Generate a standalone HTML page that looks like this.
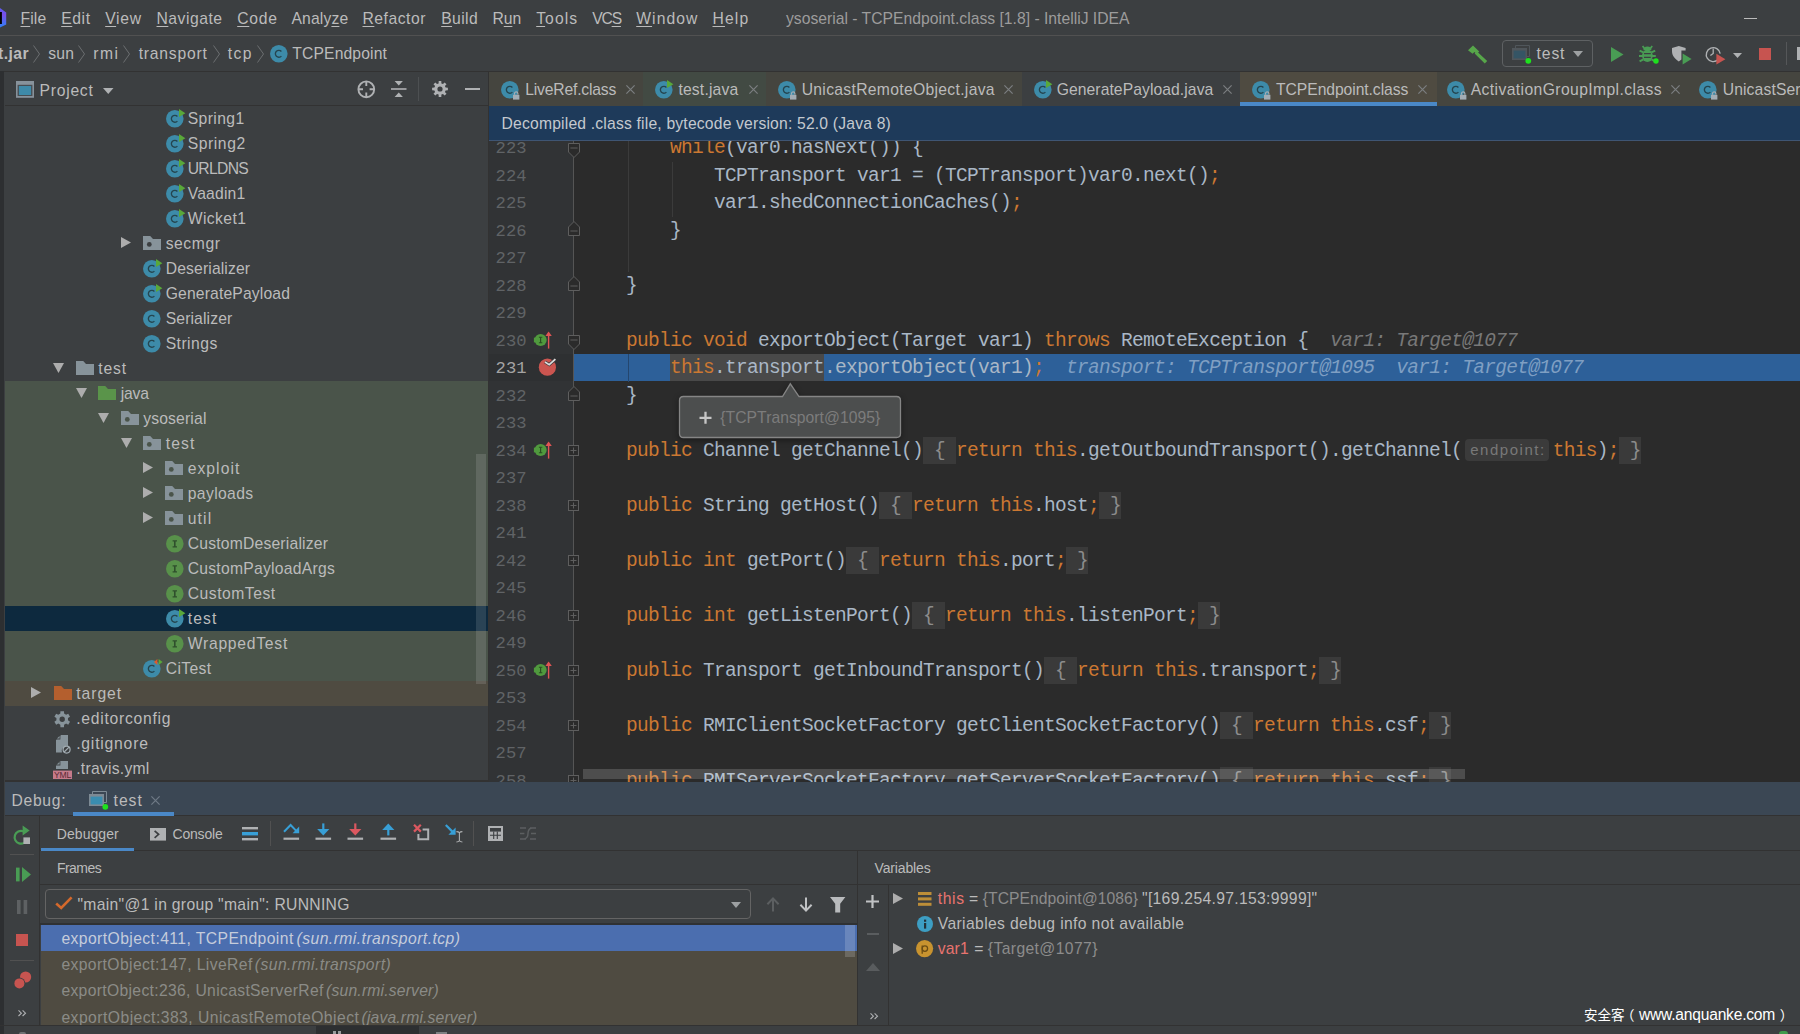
<!DOCTYPE html>
<html lang="en"><head><meta charset="utf-8"><title>ysoserial - TCPEndpoint.class [1.8] - IntelliJ IDEA</title>
<style>
*{box-sizing:border-box;margin:0;padding:0}
html,body{width:1800px;height:1034px;overflow:hidden;background:#3c3f41}
body{position:relative;font-family:"Liberation Sans", "Noto Sans CJK SC", sans-serif;font-size:15.7px;color:#bbbbbb;-webkit-font-smoothing:antialiased}
.a{position:absolute}
.t{position:absolute;white-space:pre;line-height:20px;height:20px;letter-spacing:.45px}
.m{position:absolute;white-space:pre;font-family:"Liberation Mono", "DejaVu Sans Mono", monospace;font-size:19.5px;letter-spacing:-0.7px;line-height:27.5px;height:27.5px;color:#a9b7c6}
.k{color:#cc7832}
.h{color:#787878;font-style:italic}
.ln{position:absolute;left:496px;width:33px;font-family:"Liberation Mono", "DejaVu Sans Mono", monospace;font-size:18.33px;line-height:27.5px;height:27.5px;color:#606366;white-space:pre}
.fp{background:#3a3a3a;color:#8c8c8c}
svg{position:absolute;overflow:visible}
u{text-decoration:underline;text-underline-offset:2px;text-decoration-thickness:1px}
</style></head>
<body>
<div class="a" style="left:0px;top:35px;width:1800px;height:1px;background:#515151;"></div>
<div class="a" style="left:0px;top:71px;width:1800px;height:1px;background:#323232;"></div>
<div class="a" style="left:0px;top:71px;width:4px;height:963px;background:#2d2f31;"></div>
<div class="a" style="left:5px;top:105px;width:483px;height:1px;background:#323232;"></div>
<div class="a" style="left:488px;top:72px;width:1px;height:710px;background:#323232;"></div>
<div class="a" style="left:489px;top:72px;width:1311px;height:34px;background:#3c3f41;"></div>
<div class="a" style="left:489px;top:106px;width:1311px;height:676px;background:#2b2b2b;"></div>
<div class="a" style="left:489px;top:141px;width:85px;height:641px;background:#313335;"></div>
<div class="a" style="left:489px;top:106px;width:1311px;height:34px;background:#1e3a5a;"></div>
<div class="a" style="left:489px;top:140px;width:1311px;height:1px;background:#3f5573;"></div>
<div class="a" style="left:5px;top:780px;width:484px;height:2px;background:#323232;"></div>
<div class="a" style="left:5px;top:782px;width:1795px;height:34px;background:#3b4754;"></div>
<div class="a" style="left:5px;top:815px;width:1795px;height:1px;background:#323232;"></div>
<div class="a" style="left:0px;top:1025px;width:1800px;height:1px;background:#323232;"></div>
<div class="a" style="left:316px;top:1026px;width:103px;height:8px;background:#2d2f31;"></div>
<div class="a" style="left:19px;top:1032px;width:7px;height:2px;background:#6e7173;border-radius:3px 3px 0 0"></div>
<div class="a" style="left:333px;top:1031px;width:3px;height:3px;background:#9a9c9e;"></div>
<div class="a" style="left:338px;top:1031px;width:3px;height:3px;background:#9a9c9e;"></div>
<div class="a" style="left:436px;top:1032px;width:11px;height:2px;background:#7d8082;"></div>
<div class="a" style="left:1779px;top:1031px;width:9px;height:6px;background:#3f9b4b;border-radius:4px"></div>
<svg style="left:0px;top:8px" width="7" height="20" viewBox="0 0 7 20"><defs><linearGradient id="lg" x1="0" y1="0" x2="0" y2="1"><stop offset="0" stop-color="#5a5bf2"/><stop offset="0.35" stop-color="#7a4fe8"/><stop offset="1" stop-color="#2f80f7"/></linearGradient></defs><path d="M0 0 L6.2 4.6 V16.4 L0 19.4 Z" fill="url(#lg)"/><path d="M0 4 H1.9 V16 H0 Z" fill="#000"/></svg>
<div class="t" style="left:20.5px;top:8.5px;letter-spacing:0.106px;"><u>F</u>ile</div>
<div class="t" style="left:61.2px;top:8.5px;letter-spacing:0.618px;"><u>E</u>dit</div>
<div class="t" style="left:105.2px;top:8.5px;letter-spacing:0.727px;"><u>V</u>iew</div>
<div class="t" style="left:156.5px;top:8.5px;letter-spacing:0.525px;"><u>N</u>avigate</div>
<div class="t" style="left:237.2px;top:8.5px;letter-spacing:0.795px;"><u>C</u>ode</div>
<div class="t" style="left:291.5px;top:8.5px;letter-spacing:0.131px;">Analy<u>z</u>e</div>
<div class="t" style="left:362.5px;top:8.5px;letter-spacing:0.515px;"><u>R</u>efactor</div>
<div class="t" style="left:441.2px;top:8.5px;letter-spacing:0.402px;"><u>B</u>uild</div>
<div class="t" style="left:492.5px;top:8.5px;letter-spacing:-0.091px;">R<u>u</u>n</div>
<div class="t" style="left:536.2px;top:8.5px;letter-spacing:1.069px;"><u>T</u>ools</div>
<div class="t" style="left:592.2px;top:8.5px;letter-spacing:-1.183px;">VC<u>S</u></div>
<div class="t" style="left:636.2px;top:8.5px;letter-spacing:1.081px;"><u>W</u>indow</div>
<div class="t" style="left:712.5px;top:8.5px;letter-spacing:1.111px;"><u>H</u>elp</div>
<div class="t" style="left:786px;top:8.5px;color:#9c9c9c;letter-spacing:0.005px;">ysoserial - TCPEndpoint.class [1.8] - IntelliJ IDEA</div>
<div class="a" style="left:1744px;top:18px;width:13px;height:1px;background:#bbbbbb;"></div>
<div class="t" style="left:-8.6px;top:43.5px;font-weight:bold;">rt.jar</div>
<svg style="left:32.5px;top:44.5px" width="7" height="18" viewBox="0 0 7 18"><path d="M0.5 0.5 L6.5 9 L0.5 17.5" fill="none" stroke="#6b6e70" stroke-width="1"/></svg>
<div class="t" style="left:48.3px;top:43.5px;letter-spacing:0.152px;">sun</div>
<svg style="left:78.0px;top:44.5px" width="7" height="18" viewBox="0 0 7 18"><path d="M0.5 0.5 L6.5 9 L0.5 17.5" fill="none" stroke="#6b6e70" stroke-width="1"/></svg>
<div class="t" style="left:93.3px;top:43.5px;letter-spacing:1.409px;">rmi</div>
<svg style="left:123.0px;top:44.5px" width="7" height="18" viewBox="0 0 7 18"><path d="M0.5 0.5 L6.5 9 L0.5 17.5" fill="none" stroke="#6b6e70" stroke-width="1"/></svg>
<div class="t" style="left:138.7px;top:43.5px;letter-spacing:0.785px;">transport</div>
<svg style="left:212.5px;top:44.5px" width="7" height="18" viewBox="0 0 7 18"><path d="M0.5 0.5 L6.5 9 L0.5 17.5" fill="none" stroke="#6b6e70" stroke-width="1"/></svg>
<div class="t" style="left:227.7px;top:43.5px;letter-spacing:1.431px;">tcp</div>
<svg style="left:256.5px;top:44.5px" width="7" height="18" viewBox="0 0 7 18"><path d="M0.5 0.5 L6.5 9 L0.5 17.5" fill="none" stroke="#6b6e70" stroke-width="1"/></svg>
<svg style="left:269.5px;top:44.8px" width="17.6" height="17.6" viewBox="0 0 17.6 17.6"><circle cx="8.8" cy="8.8" r="8.8" fill="#3d8ba9"/><path d="M11.4 6.500000000000001 A3.45 3.45 0 1 0 11.4 11.100000000000001" fill="none" stroke="#25454f" stroke-width="1.35"/></svg>
<div class="t" style="left:292.3px;top:43.5px;letter-spacing:0.129px;">TCPEndpoint</div>
<svg style="left:1467px;top:44.5px" width="21" height="19" viewBox="0 0 21 19"><path d="M1 5.2 L6 0.6 L12.2 6.4 L9.6 9 L7.4 7 L5.6 8.8 Z" fill="#57a64a"/><path d="M7.6 8.6 L10 6.4 L20.2 16 L17.8 18.4 Z" fill="#57a64a"/></svg>
<div class="a" style="left:1502px;top:40px;width:91px;height:27px;border:1px solid #5e6163;border-radius:4px"></div>
<svg style="left:1511.5px;top:45px" width="20" height="19" viewBox="0 0 20 19"><path d="M3.5 3 V0.5 H17.5 V11.5 H15" fill="none" stroke="#50565b" stroke-width="1"/><rect x="0" y="3" width="15" height="12" fill="#50565b"/><rect x="1.6" y="5.6" width="11.8" height="7.8" fill="#355565"/><circle cx="16.3" cy="15.8" r="2.9" fill="#1ee11e"/></svg>
<div class="t" style="left:1536.6px;top:44.3px;letter-spacing:0.868px;">test</div>
<svg style="left:1573px;top:51px" width="10" height="6" viewBox="0 0 10 6"><path d="M0 0 H10 L5 6 Z" fill="#9da0a2"/></svg>
<svg style="left:1611px;top:46.5px" width="12.5" height="15" viewBox="0 0 12.5 15"><path d="M0 0 L12.5 7.5 L0 15 Z" fill="#499c54"/></svg>
<svg style="left:1639px;top:45px" width="20" height="19" viewBox="0 0 20 19"><ellipse cx="8.4" cy="10.8" rx="5.3" ry="6.2" fill="#499c54"/><path d="M5.4 3.6 L3.6 1 M11.4 3.6 L13.2 1" stroke="#499c54" stroke-width="1.7" fill="none"/><path d="M4.4 5.2 A4 3.6 0 0 1 12.4 5.2 Z" fill="#499c54"/><path d="M4.4 7.4 L0.6 5.6 M12.4 7.4 L16.2 5.6 M4 11 H0 M12.8 11 H16.8 M4.4 14.4 L0.6 16.4 M12.4 14.4 L16.2 16.4" stroke="#499c54" stroke-width="2" fill="none"/><path d="M5 8.6 H11.8 M5 12.4 H11.8" stroke="#3c3f41" stroke-width="1.1"/><circle cx="17" cy="16" r="2.7" fill="#1ee11e"/></svg>
<svg style="left:1671.5px;top:46px" width="21" height="19" viewBox="0 0 21 19"><path d="M0 2 L6.8 0 L13.6 2 V4.6 H9.4 V13.4 L6.8 15.4 C2 12.4 0 9 0 5 Z" fill="#afb1b3"/><path d="M10.6 7.6 L19.6 13 L10.6 18.4 Z" fill="#499c54"/></svg>
<svg style="left:1705px;top:45px" width="22" height="20" viewBox="0 0 22 20"><path d="M13.2 14.6 A7 7 0 1 1 15.2 8.6" fill="none" stroke="#afb1b3" stroke-width="1.4"/><path d="M8.2 3.6 V8.4 L5.4 10.6" fill="none" stroke="#afb1b3" stroke-width="1.3"/><path d="M11.4 8.8 L20.4 14.2 L11.4 19.6 Z" fill="#c75450"/></svg>
<svg style="left:1732.5px;top:53px" width="9" height="5" viewBox="0 0 9 5"><path d="M0 0 H9 L4.5 5 Z" fill="#afb1b3"/></svg>
<div class="a" style="left:1759px;top:48px;width:12px;height:12px;background:#c75450;"></div>
<div class="a" style="left:1785.5px;top:42px;width:1px;height:23px;background:#555759;"></div>
<div class="a" style="left:1797px;top:47px;width:3px;height:13px;background:#afb1b3;"></div>
<svg style="left:16px;top:81.2px" width="18" height="16.8" viewBox="0 0 18 16.8"><rect x="0" y="0" width="18" height="16.8" fill="#87929b"/><rect x="1.6" y="3.8" width="14.8" height="11.2" fill="#474d52"/><rect x="2.9" y="5" width="12.2" height="9" fill="#3e8aa9"/></svg>
<div class="t" style="left:39.6px;top:80.6px;letter-spacing:0.729px;">Project</div>
<svg style="left:103px;top:87.5px" width="10.5" height="6" viewBox="0 0 10.5 6"><path d="M0 0 H10.5 L5.25 6 Z" fill="#afb1b3"/></svg>
<svg style="left:356.5px;top:80px" width="18.6" height="18.6" viewBox="0 0 18.6 18.6"><circle cx="9.3" cy="9.3" r="7.9" fill="none" stroke="#afb1b3" stroke-width="1.9"/><path d="M9.3 1 V6 M9.3 12.6 V17.6 M1 9.3 H6 M12.6 9.3 H17.6" stroke="#afb1b3" stroke-width="1.9"/></svg>
<svg style="left:390.5px;top:81px" width="15.5" height="16" viewBox="0 0 15.5 16"><path d="M3.6 0 H11.9 L7.75 4.4 Z M3.6 16 H11.9 L7.75 11.6 Z" fill="#afb1b3"/><path d="M0 8 H15.5" stroke="#afb1b3" stroke-width="1.6"/></svg>
<div class="a" style="left:418px;top:77px;width:1px;height:24px;background:#4d5052;"></div>
<svg style="left:431.7px;top:81.2px" width="16" height="16" viewBox="0 0 16 16"><path d="M6.69 0.11 L9.31 0.11 L9.39 2.41 L10.97 3.07 L12.65 1.49 L14.51 3.35 L12.93 5.03 L13.59 6.61 L15.89 6.69 L15.89 9.31 L13.59 9.39 L12.93 10.97 L14.51 12.65 L12.65 14.51 L10.97 12.93 L9.39 13.59 L9.31 15.89 L6.69 15.89 L6.61 13.59 L5.03 12.93 L3.35 14.51 L1.49 12.65 L3.07 10.97 L2.41 9.39 L0.11 9.31 L0.11 6.69 L2.41 6.61 L3.07 5.03 L1.49 3.35 L3.35 1.49 L5.03 3.07 L6.61 2.41 Z M10.6 8 A2.6 2.6 0 1 0 5.4 8 A2.6 2.6 0 1 0 10.6 8 Z" fill="#afb1b3" fill-rule="evenodd"/></svg>
<div class="a" style="left:464.5px;top:88.3px;width:15px;height:1.7px;background:#afb1b3;"></div>
<div class="a" style="left:489px;top:72px;width:154px;height:34px;background:#45453f;"></div>
<svg style="left:500.9px;top:81.0px" width="17.6" height="17.6" viewBox="0 0 17.6 17.6"><circle cx="8.8" cy="8.8" r="8.8" fill="#3d8ba9"/><path d="M11.4 6.500000000000001 A3.45 3.45 0 1 0 11.4 11.100000000000001" fill="none" stroke="#25454f" stroke-width="1.35"/></svg><svg style="left:513.3px;top:91.39999999999999px" width="6.4" height="8.6" viewBox="0 0 6.4 8.6"><path d="M1.5 3.8 V2.6 A1.7 1.7 0 0 1 4.9 2.6 V3.8" fill="none" stroke="#a3adb5" stroke-width="1.2"/><rect x="0" y="3.8" width="6.4" height="4.8" fill="#a3adb5"/></svg>
<div class="t" style="left:525.1999999999999px;top:80.4px;letter-spacing:-0.175px;">LiveRef.class</div>
<svg style="left:625.5px;top:85.0px" width="9" height="9" viewBox="0 0 9 9"><path d="M0.4 0.4 L8.6 8.6 M8.6 0.4 L0.4 8.6" stroke="#7b7e80" stroke-width="1.2" fill="none"/></svg>
<div class="a" style="left:643px;top:72px;width:123px;height:34px;background:#424a43;"></div>
<svg style="left:654.5px;top:81.0px" width="17.6" height="17.6" viewBox="0 0 17.6 17.6"><circle cx="8.8" cy="8.8" r="8.8" fill="#3d8ba9"/><path d="M11.4 6.500000000000001 A3.45 3.45 0 1 0 11.4 11.100000000000001" fill="none" stroke="#25454f" stroke-width="1.35"/></svg><svg style="left:667.0px;top:80.0px" width="6.4" height="8" viewBox="0 0 6.4 8"><path d="M0 0 L6.4 4.2 L0 8 Z" fill="#59a83a"/></svg>
<div class="t" style="left:678.4px;top:80.4px;letter-spacing:0.183px;">test.java</div>
<svg style="left:748.8px;top:85.0px" width="9" height="9" viewBox="0 0 9 9"><path d="M0.4 0.4 L8.6 8.6 M8.6 0.4 L0.4 8.6" stroke="#7b7e80" stroke-width="1.2" fill="none"/></svg>
<div class="a" style="left:766px;top:72px;width:256px;height:34px;background:#45453f;"></div>
<svg style="left:777.9000000000001px;top:81.0px" width="17.6" height="17.6" viewBox="0 0 17.6 17.6"><circle cx="8.8" cy="8.8" r="8.8" fill="#3d8ba9"/><path d="M11.4 6.500000000000001 A3.45 3.45 0 1 0 11.4 11.100000000000001" fill="none" stroke="#25454f" stroke-width="1.35"/></svg><svg style="left:790.3000000000001px;top:91.39999999999999px" width="6.4" height="8.6" viewBox="0 0 6.4 8.6"><path d="M1.5 3.8 V2.6 A1.7 1.7 0 0 1 4.9 2.6 V3.8" fill="none" stroke="#a3adb5" stroke-width="1.2"/><rect x="0" y="3.8" width="6.4" height="4.8" fill="#a3adb5"/></svg>
<div class="t" style="left:801.6999999999999px;top:80.4px;letter-spacing:0.312px;">UnicastRemoteObject.java</div>
<svg style="left:1003.8px;top:85.0px" width="9" height="9" viewBox="0 0 9 9"><path d="M0.4 0.4 L8.6 8.6 M8.6 0.4 L0.4 8.6" stroke="#7b7e80" stroke-width="1.2" fill="none"/></svg>
<div class="a" style="left:1022px;top:72px;width:218px;height:34px;background:#3c3f41;"></div>
<svg style="left:1033.5px;top:81.0px" width="17.6" height="17.6" viewBox="0 0 17.6 17.6"><circle cx="8.8" cy="8.8" r="8.8" fill="#3d8ba9"/><path d="M11.4 6.500000000000001 A3.45 3.45 0 1 0 11.4 11.100000000000001" fill="none" stroke="#25454f" stroke-width="1.35"/></svg><svg style="left:1046.0px;top:80.0px" width="6.4" height="8" viewBox="0 0 6.4 8"><path d="M0 0 L6.4 4.2 L0 8 Z" fill="#59a83a"/></svg>
<div class="t" style="left:1056.7px;top:80.4px;letter-spacing:0.071px;">GeneratePayload.java</div>
<svg style="left:1222.8px;top:85.0px" width="9" height="9" viewBox="0 0 9 9"><path d="M0.4 0.4 L8.6 8.6 M8.6 0.4 L0.4 8.6" stroke="#7b7e80" stroke-width="1.2" fill="none"/></svg>
<div class="a" style="left:1240px;top:72px;width:197px;height:34px;background:#4f4b41;"></div>
<svg style="left:1251.9px;top:81.0px" width="17.6" height="17.6" viewBox="0 0 17.6 17.6"><circle cx="8.8" cy="8.8" r="8.8" fill="#3d8ba9"/><path d="M11.4 6.500000000000001 A3.45 3.45 0 1 0 11.4 11.100000000000001" fill="none" stroke="#25454f" stroke-width="1.35"/></svg><svg style="left:1264.3px;top:91.39999999999999px" width="6.4" height="8.6" viewBox="0 0 6.4 8.6"><path d="M1.5 3.8 V2.6 A1.7 1.7 0 0 1 4.9 2.6 V3.8" fill="none" stroke="#a3adb5" stroke-width="1.2"/><rect x="0" y="3.8" width="6.4" height="4.8" fill="#a3adb5"/></svg>
<div class="t" style="left:1276.1000000000001px;top:80.4px;letter-spacing:-0.075px;">TCPEndpoint.class</div>
<svg style="left:1417.8px;top:85.0px" width="9" height="9" viewBox="0 0 9 9"><path d="M0.4 0.4 L8.6 8.6 M8.6 0.4 L0.4 8.6" stroke="#7b7e80" stroke-width="1.2" fill="none"/></svg>
<div class="a" style="left:1437px;top:72px;width:250px;height:34px;background:#45453f;"></div>
<svg style="left:1447.2px;top:81.0px" width="17.6" height="17.6" viewBox="0 0 17.6 17.6"><circle cx="8.8" cy="8.8" r="8.8" fill="#3d8ba9"/><path d="M11.4 6.500000000000001 A3.45 3.45 0 1 0 11.4 11.100000000000001" fill="none" stroke="#25454f" stroke-width="1.35"/></svg><svg style="left:1459.6px;top:91.39999999999999px" width="6.4" height="8.6" viewBox="0 0 6.4 8.6"><path d="M1.5 3.8 V2.6 A1.7 1.7 0 0 1 4.9 2.6 V3.8" fill="none" stroke="#a3adb5" stroke-width="1.2"/><rect x="0" y="3.8" width="6.4" height="4.8" fill="#a3adb5"/></svg>
<div class="t" style="left:1470.7px;top:80.4px;letter-spacing:0.398px;">ActivationGroupImpl.class</div>
<svg style="left:1670.5px;top:85.0px" width="9" height="9" viewBox="0 0 9 9"><path d="M0.4 0.4 L8.6 8.6 M8.6 0.4 L0.4 8.6" stroke="#7b7e80" stroke-width="1.2" fill="none"/></svg>
<div class="a" style="left:1687px;top:72px;width:113px;height:34px;background:#45453f;"></div>
<svg style="left:1698.5px;top:81.0px" width="17.6" height="17.6" viewBox="0 0 17.6 17.6"><circle cx="8.8" cy="8.8" r="8.8" fill="#3d8ba9"/><path d="M11.4 6.500000000000001 A3.45 3.45 0 1 0 11.4 11.100000000000001" fill="none" stroke="#25454f" stroke-width="1.35"/></svg><svg style="left:1710.8999999999999px;top:91.39999999999999px" width="6.4" height="8.6" viewBox="0 0 6.4 8.6"><path d="M1.5 3.8 V2.6 A1.7 1.7 0 0 1 4.9 2.6 V3.8" fill="none" stroke="#a3adb5" stroke-width="1.2"/><rect x="0" y="3.8" width="6.4" height="4.8" fill="#a3adb5"/></svg>
<div class="t" style="left:1722.7px;top:80.4px;letter-spacing:0.13px;">UnicastSer</div>
<div class="a" style="left:1240px;top:102px;width:197px;height:4px;background:#4a88c7;"></div>
<div class="t" style="left:501.6px;top:114.2px;color:#c4c9cf;letter-spacing:0.183px;">Decompiled .class file, bytecode version: 52.0 (Java 8)</div>
<div class="a" style="left:5px;top:381px;width:483px;height:300px;background:#4a544a;"></div>
<div class="a" style="left:5px;top:681px;width:483px;height:25px;background:#4f4b41;"></div>
<div class="a" style="left:5px;top:606px;width:483px;height:25px;background:#0d293e;"></div>
<svg style="left:166.29999999999998px;top:109.9px" width="17.6" height="17.6" viewBox="0 0 17.6 17.6"><circle cx="8.8" cy="8.8" r="8.8" fill="#3d8ba9"/><path d="M11.4 6.500000000000001 A3.45 3.45 0 1 0 11.4 11.100000000000001" fill="none" stroke="#25454f" stroke-width="1.35"/></svg><svg style="left:178.79999999999998px;top:108.9px" width="6.4" height="8" viewBox="0 0 6.4 8"><path d="M0 0 L6.4 4.2 L0 8 Z" fill="#59a83a"/></svg>
<div class="t" style="left:187.7px;top:108.9px;letter-spacing:0.404px;">Spring1</div>
<svg style="left:166.29999999999998px;top:134.89999999999998px" width="17.6" height="17.6" viewBox="0 0 17.6 17.6"><circle cx="8.8" cy="8.8" r="8.8" fill="#3d8ba9"/><path d="M11.4 6.500000000000001 A3.45 3.45 0 1 0 11.4 11.100000000000001" fill="none" stroke="#25454f" stroke-width="1.35"/></svg><svg style="left:178.79999999999998px;top:133.89999999999998px" width="6.4" height="8" viewBox="0 0 6.4 8"><path d="M0 0 L6.4 4.2 L0 8 Z" fill="#59a83a"/></svg>
<div class="t" style="left:187.7px;top:133.9px;letter-spacing:0.57px;">Spring2</div>
<svg style="left:166.29999999999998px;top:159.89999999999998px" width="17.6" height="17.6" viewBox="0 0 17.6 17.6"><circle cx="8.8" cy="8.8" r="8.8" fill="#3d8ba9"/><path d="M11.4 6.500000000000001 A3.45 3.45 0 1 0 11.4 11.100000000000001" fill="none" stroke="#25454f" stroke-width="1.35"/></svg><svg style="left:178.79999999999998px;top:158.89999999999998px" width="6.4" height="8" viewBox="0 0 6.4 8"><path d="M0 0 L6.4 4.2 L0 8 Z" fill="#59a83a"/></svg>
<div class="t" style="left:187.7px;top:158.9px;letter-spacing:-0.683px;">URLDNS</div>
<svg style="left:166.29999999999998px;top:184.89999999999998px" width="17.6" height="17.6" viewBox="0 0 17.6 17.6"><circle cx="8.8" cy="8.8" r="8.8" fill="#3d8ba9"/><path d="M11.4 6.500000000000001 A3.45 3.45 0 1 0 11.4 11.100000000000001" fill="none" stroke="#25454f" stroke-width="1.35"/></svg><svg style="left:178.79999999999998px;top:183.89999999999998px" width="6.4" height="8" viewBox="0 0 6.4 8"><path d="M0 0 L6.4 4.2 L0 8 Z" fill="#59a83a"/></svg>
<div class="t" style="left:187.7px;top:183.9px;letter-spacing:0.18px;">Vaadin1</div>
<svg style="left:166.29999999999998px;top:209.89999999999998px" width="17.6" height="17.6" viewBox="0 0 17.6 17.6"><circle cx="8.8" cy="8.8" r="8.8" fill="#3d8ba9"/><path d="M11.4 6.500000000000001 A3.45 3.45 0 1 0 11.4 11.100000000000001" fill="none" stroke="#25454f" stroke-width="1.35"/></svg><svg style="left:178.79999999999998px;top:208.89999999999998px" width="6.4" height="8" viewBox="0 0 6.4 8"><path d="M0 0 L6.4 4.2 L0 8 Z" fill="#59a83a"/></svg>
<div class="t" style="left:187.7px;top:208.9px;letter-spacing:0.401px;">Wicket1</div>
<svg style="left:143.3px;top:236.3px" width="18" height="14" viewBox="0 0 18 14"><path d="M0 0 H7.2 L10 3 H18 V14 H0 Z" fill="#87939a"/><circle cx="6.3" cy="8.4" r="2.4" fill="#3c3f41"/></svg>
<svg style="left:120.8px;top:237.3px" width="10" height="11" viewBox="0 0 10 11"><path d="M0 0 L10 5.5 L0 11 Z" fill="#adadad"/></svg>
<div class="t" style="left:165.7px;top:233.9px;letter-spacing:0.552px;">secmgr</div>
<svg style="left:143.29999999999998px;top:259.9px" width="17.6" height="17.6" viewBox="0 0 17.6 17.6"><circle cx="8.8" cy="8.8" r="8.8" fill="#3d8ba9"/><path d="M11.4 6.500000000000001 A3.45 3.45 0 1 0 11.4 11.100000000000001" fill="none" stroke="#25454f" stroke-width="1.35"/></svg><svg style="left:155.79999999999998px;top:258.9px" width="6.4" height="8" viewBox="0 0 6.4 8"><path d="M0 0 L6.4 4.2 L0 8 Z" fill="#59a83a"/></svg>
<div class="t" style="left:165.7px;top:258.9px;letter-spacing:0.143px;">Deserializer</div>
<svg style="left:143.29999999999998px;top:284.9px" width="17.6" height="17.6" viewBox="0 0 17.6 17.6"><circle cx="8.8" cy="8.8" r="8.8" fill="#3d8ba9"/><path d="M11.4 6.500000000000001 A3.45 3.45 0 1 0 11.4 11.100000000000001" fill="none" stroke="#25454f" stroke-width="1.35"/></svg><svg style="left:155.79999999999998px;top:283.9px" width="6.4" height="8" viewBox="0 0 6.4 8"><path d="M0 0 L6.4 4.2 L0 8 Z" fill="#59a83a"/></svg>
<div class="t" style="left:165.7px;top:283.9px;letter-spacing:0.149px;">GeneratePayload</div>
<svg style="left:143.29999999999998px;top:309.9px" width="17.6" height="17.6" viewBox="0 0 17.6 17.6"><circle cx="8.8" cy="8.8" r="8.8" fill="#3d8ba9"/><path d="M11.4 6.500000000000001 A3.45 3.45 0 1 0 11.4 11.100000000000001" fill="none" stroke="#25454f" stroke-width="1.35"/></svg>
<div class="t" style="left:165.7px;top:308.9px;letter-spacing:0.134px;">Serializer</div>
<svg style="left:143.29999999999998px;top:334.9px" width="17.6" height="17.6" viewBox="0 0 17.6 17.6"><circle cx="8.8" cy="8.8" r="8.8" fill="#3d8ba9"/><path d="M11.4 6.500000000000001 A3.45 3.45 0 1 0 11.4 11.100000000000001" fill="none" stroke="#25454f" stroke-width="1.35"/></svg>
<div class="t" style="left:165.7px;top:333.9px;letter-spacing:0.462px;">Strings</div>
<svg style="left:75.8px;top:361.3px" width="18" height="14" viewBox="0 0 18 14"><path d="M0 0 H7.2 L10 3 H18 V14 H0 Z" fill="#87939a"/></svg>
<svg style="left:53.3px;top:362.6px" width="11" height="10" viewBox="0 0 11 10"><path d="M0 0 L11 0 L5.5 10 Z" fill="#adadad"/></svg>
<div class="t" style="left:98.2px;top:358.9px;letter-spacing:0.901px;">test</div>
<svg style="left:98.3px;top:386.3px" width="18" height="14" viewBox="0 0 18 14"><path d="M0 0 H7.2 L10 3 H18 V14 H0 Z" fill="#5a944a"/></svg>
<svg style="left:75.8px;top:387.6px" width="11" height="10" viewBox="0 0 11 10"><path d="M0 0 L11 0 L5.5 10 Z" fill="#adadad"/></svg>
<div class="t" style="left:120.7px;top:383.9px;letter-spacing:-0.194px;">java</div>
<svg style="left:120.8px;top:411.3px" width="18" height="14" viewBox="0 0 18 14"><path d="M0 0 H7.2 L10 3 H18 V14 H0 Z" fill="#87939a"/><circle cx="6.3" cy="8.4" r="2.4" fill="#4a544a"/></svg>
<svg style="left:98.3px;top:412.6px" width="11" height="10" viewBox="0 0 11 10"><path d="M0 0 L11 0 L5.5 10 Z" fill="#adadad"/></svg>
<div class="t" style="left:143.2px;top:408.9px;letter-spacing:0.162px;">ysoserial</div>
<svg style="left:143.3px;top:436.3px" width="18" height="14" viewBox="0 0 18 14"><path d="M0 0 H7.2 L10 3 H18 V14 H0 Z" fill="#87939a"/><circle cx="6.3" cy="8.4" r="2.4" fill="#4a544a"/></svg>
<svg style="left:120.8px;top:437.6px" width="11" height="10" viewBox="0 0 11 10"><path d="M0 0 L11 0 L5.5 10 Z" fill="#adadad"/></svg>
<div class="t" style="left:165.7px;top:433.9px;letter-spacing:1.101px;">test</div>
<svg style="left:165.3px;top:461.3px" width="18" height="14" viewBox="0 0 18 14"><path d="M0 0 H7.2 L10 3 H18 V14 H0 Z" fill="#87939a"/><circle cx="6.3" cy="8.4" r="2.4" fill="#4a544a"/></svg>
<svg style="left:142.8px;top:462.3px" width="10" height="11" viewBox="0 0 10 11"><path d="M0 0 L10 5.5 L0 11 Z" fill="#adadad"/></svg>
<div class="t" style="left:187.7px;top:458.9px;letter-spacing:1.04px;">exploit</div>
<svg style="left:165.3px;top:486.3px" width="18" height="14" viewBox="0 0 18 14"><path d="M0 0 H7.2 L10 3 H18 V14 H0 Z" fill="#87939a"/><circle cx="6.3" cy="8.4" r="2.4" fill="#4a544a"/></svg>
<svg style="left:142.8px;top:487.3px" width="10" height="11" viewBox="0 0 10 11"><path d="M0 0 L10 5.5 L0 11 Z" fill="#adadad"/></svg>
<div class="t" style="left:187.7px;top:483.9px;letter-spacing:0.386px;">payloads</div>
<svg style="left:165.3px;top:511.3px" width="18" height="14" viewBox="0 0 18 14"><path d="M0 0 H7.2 L10 3 H18 V14 H0 Z" fill="#87939a"/><circle cx="6.3" cy="8.4" r="2.4" fill="#4a544a"/></svg>
<svg style="left:142.8px;top:512.3px" width="10" height="11" viewBox="0 0 10 11"><path d="M0 0 L10 5.5 L0 11 Z" fill="#adadad"/></svg>
<div class="t" style="left:187.7px;top:508.9px;letter-spacing:1.146px;">util</div>
<svg style="left:166.29999999999998px;top:534.9000000000001px" width="17.6" height="17.6" viewBox="0 0 17.6 17.6"><circle cx="8.8" cy="8.8" r="8.8" fill="#58914a"/><path d="M6.6000000000000005 5.200000000000001 H11.0 V6.4 H9.600000000000001 V11.200000000000001 H11.0 V12.4 H6.6000000000000005 V11.200000000000001 H8.0 V6.4 H6.6000000000000005 Z" fill="#2f4f2c"/></svg>
<div class="t" style="left:187.7px;top:533.9px;letter-spacing:0.201px;">CustomDeserializer</div>
<svg style="left:166.29999999999998px;top:559.9000000000001px" width="17.6" height="17.6" viewBox="0 0 17.6 17.6"><circle cx="8.8" cy="8.8" r="8.8" fill="#58914a"/><path d="M6.6000000000000005 5.200000000000001 H11.0 V6.4 H9.600000000000001 V11.200000000000001 H11.0 V12.4 H6.6000000000000005 V11.200000000000001 H8.0 V6.4 H6.6000000000000005 Z" fill="#2f4f2c"/></svg>
<div class="t" style="left:187.7px;top:558.9px;letter-spacing:0.256px;">CustomPayloadArgs</div>
<svg style="left:166.29999999999998px;top:584.9000000000001px" width="17.6" height="17.6" viewBox="0 0 17.6 17.6"><circle cx="8.8" cy="8.8" r="8.8" fill="#58914a"/><path d="M6.6000000000000005 5.200000000000001 H11.0 V6.4 H9.600000000000001 V11.200000000000001 H11.0 V12.4 H6.6000000000000005 V11.200000000000001 H8.0 V6.4 H6.6000000000000005 Z" fill="#2f4f2c"/></svg>
<div class="t" style="left:187.7px;top:583.9px;letter-spacing:0.519px;">CustomTest</div>
<svg style="left:166.29999999999998px;top:609.9000000000001px" width="17.6" height="17.6" viewBox="0 0 17.6 17.6"><circle cx="8.8" cy="8.8" r="8.8" fill="#3d8ba9"/><path d="M11.4 6.500000000000001 A3.45 3.45 0 1 0 11.4 11.100000000000001" fill="none" stroke="#25454f" stroke-width="1.35"/></svg><svg style="left:178.79999999999998px;top:608.9000000000001px" width="6.4" height="8" viewBox="0 0 6.4 8"><path d="M0 0 L6.4 4.2 L0 8 Z" fill="#59a83a"/></svg>
<div class="t" style="left:187.7px;top:608.9px;letter-spacing:1.101px;">test</div>
<svg style="left:166.29999999999998px;top:634.9000000000001px" width="17.6" height="17.6" viewBox="0 0 17.6 17.6"><circle cx="8.8" cy="8.8" r="8.8" fill="#58914a"/><path d="M6.6000000000000005 5.200000000000001 H11.0 V6.4 H9.600000000000001 V11.200000000000001 H11.0 V12.4 H6.6000000000000005 V11.200000000000001 H8.0 V6.4 H6.6000000000000005 Z" fill="#2f4f2c"/></svg>
<div class="t" style="left:187.7px;top:633.9px;letter-spacing:0.746px;">WrappedTest</div>
<svg style="left:143.29999999999998px;top:659.9000000000001px" width="17.6" height="17.6" viewBox="0 0 17.6 17.6"><circle cx="8.8" cy="8.8" r="8.8" fill="#3d8ba9"/><path d="M11.4 6.500000000000001 A3.45 3.45 0 1 0 11.4 11.100000000000001" fill="none" stroke="#25454f" stroke-width="1.35"/></svg><svg style="left:153.5px;top:658.9000000000001px" width="8.6" height="6" viewBox="0 0 8.6 6"><path d="M3.4 0 V6 L0 3 Z" fill="#e05a2b"/><path d="M4.6 0 L8.6 3 L4.6 6 Z" fill="#59a83a"/></svg>
<div class="t" style="left:165.7px;top:658.9px;letter-spacing:0.381px;">CiTest</div>
<svg style="left:53.8px;top:686.3px" width="18" height="14" viewBox="0 0 18 14"><path d="M0 0 H7.2 L10 3 H18 V14 H0 Z" fill="#b45f2e"/></svg>
<svg style="left:31.299999999999997px;top:687.3px" width="10" height="11" viewBox="0 0 10 11"><path d="M0 0 L10 5.5 L0 11 Z" fill="#adadad"/></svg>
<div class="t" style="left:76.2px;top:683.9px;letter-spacing:0.975px;">target</div>
<svg style="left:53.8px;top:710.5999999999999px" width="16.4" height="16.4" viewBox="0 0 16.4 16.4"><path d="M6.41 0.20 L9.99 0.20 L10.08 2.60 L12.10 3.77 L14.24 2.65 L16.02 5.75 L13.99 7.03 L13.99 9.37 L16.02 10.65 L14.24 13.75 L12.10 12.63 L10.08 13.80 L9.99 16.20 L6.41 16.20 L6.32 13.80 L4.30 12.63 L2.16 13.75 L0.38 10.65 L2.41 9.37 L2.41 7.03 L0.38 5.75 L2.16 2.65 L4.30 3.77 L6.32 2.60 Z M10.899999999999999 8.2 A2.7 2.7 0 1 0 5.499999999999999 8.2 A2.7 2.7 0 1 0 10.899999999999999 8.2 Z" fill="#87939a" fill-rule="evenodd"/></svg>
<div class="t" style="left:76.2px;top:708.9px;letter-spacing:0.744px;">.editorconfig</div>
<svg style="left:56px;top:734.9px" width="15" height="19" viewBox="0 0 15 19"><path d="M5 0 H12 V11 A5 5 0 0 0 6 17.5 H0 V5 Z" fill="#87939a"/><path d="M4.2 0 V4.2 H0 Z" fill="#3c3f41" transform="translate(0.6 0.6)" opacity="0"/><path d="M0 4.4 L4.4 0 V4.4 Z" fill="#3c3f41"/><path d="M0.9 3.6 L3.6 0.9 V3.6 Z" fill="#87939a"/><circle cx="10.6" cy="14.6" r="3.5" fill="none" stroke="#a2acb2" stroke-width="1.2"/><path d="M8.2 17 L13 12.2" stroke="#a2acb2" stroke-width="1.2"/></svg>
<div class="t" style="left:76.2px;top:733.9px;letter-spacing:0.795px;">.gitignore</div>
<svg style="left:53.2px;top:760.9px" width="19" height="18" viewBox="0 0 19 18"><path d="M7.4 0 H15 V8 H3 V4.4 Z" fill="#87939a"/><path d="M3 4.4 L7.4 0 V4.4 Z" fill="#3c3f41"/><path d="M3.9 3.6 L6.6 0.9 V3.6 Z" fill="#87939a"/><rect x="0" y="9.6" width="19" height="8.4" fill="#c57b8b"/><text x="9.5" y="16.8" font-family="Liberation Sans, sans-serif" font-size="8.6" text-anchor="middle" fill="#5a2b36" letter-spacing="-0.2">YML</text></svg>
<div class="t" style="left:76.2px;top:758.9px;letter-spacing:0.251px;">.travis.yml</div>
<div class="a" style="left:476px;top:454px;width:10px;height:230px;background:rgba(255,255,255,0.12);"></div>
<div class="a" style="left:5px;top:780px;width:483px;height:2px;background:#323232;"></div>
<div class="a" style="left:489px;top:141px;width:1311px;height:641px;overflow:hidden">
<div class="a" style="left:0px;top:213.0px;width:85px;height:27px;background:#2e3032;"></div>
<div class="a" style="left:85px;top:213.0px;width:1226px;height:27px;background:#2d6099;"></div>
<div class="a" style="left:181px;top:213.0px;width:154px;height:27px;background:#494949;"></div>
<div class="a" style="left:139px;top:0px;width:1px;height:130.5px;background:#3b3b3b;"></div>
<div class="a" style="left:183px;top:20.5px;width:1px;height:55.0px;background:#3b3b3b;"></div>
<div class="a" style="left:139px;top:213.0px;width:1px;height:27.5px;background:#24466e;"></div>
<div class="a" style="left:84px;top:0px;width:1px;height:641px;background:#555555;"></div>
<div class="ln" style="left:6.600000000000023px;top:-5.70px;color:#606366;font-size:17.2px">223</div>
<div class="ln" style="left:6.600000000000023px;top:21.80px;color:#606366;font-size:17.2px">224</div>
<div class="ln" style="left:6.600000000000023px;top:49.30px;color:#606366;font-size:17.2px">225</div>
<div class="ln" style="left:6.600000000000023px;top:76.80px;color:#606366;font-size:17.2px">226</div>
<div class="ln" style="left:6.600000000000023px;top:104.30px;color:#606366;font-size:17.2px">227</div>
<div class="ln" style="left:6.600000000000023px;top:131.80px;color:#606366;font-size:17.2px">228</div>
<div class="ln" style="left:6.600000000000023px;top:159.30px;color:#606366;font-size:17.2px">229</div>
<div class="ln" style="left:6.600000000000023px;top:186.80px;color:#606366;font-size:17.2px">230</div>
<div class="ln" style="left:6.600000000000023px;top:214.30px;color:#a4a3a3;font-size:17.2px">231</div>
<div class="ln" style="left:6.600000000000023px;top:241.80px;color:#606366;font-size:17.2px">232</div>
<div class="ln" style="left:6.600000000000023px;top:269.30px;color:#606366;font-size:17.2px">233</div>
<div class="ln" style="left:6.600000000000023px;top:296.80px;color:#606366;font-size:17.2px">234</div>
<div class="ln" style="left:6.600000000000023px;top:324.30px;color:#606366;font-size:17.2px">237</div>
<div class="ln" style="left:6.600000000000023px;top:351.80px;color:#606366;font-size:17.2px">238</div>
<div class="ln" style="left:6.600000000000023px;top:379.30px;color:#606366;font-size:17.2px">241</div>
<div class="ln" style="left:6.600000000000023px;top:406.80px;color:#606366;font-size:17.2px">242</div>
<div class="ln" style="left:6.600000000000023px;top:434.30px;color:#606366;font-size:17.2px">245</div>
<div class="ln" style="left:6.600000000000023px;top:461.80px;color:#606366;font-size:17.2px">246</div>
<div class="ln" style="left:6.600000000000023px;top:489.30px;color:#606366;font-size:17.2px">249</div>
<div class="ln" style="left:6.600000000000023px;top:516.80px;color:#606366;font-size:17.2px">250</div>
<div class="ln" style="left:6.600000000000023px;top:544.30px;color:#606366;font-size:17.2px">253</div>
<div class="ln" style="left:6.600000000000023px;top:571.80px;color:#606366;font-size:17.2px">254</div>
<div class="ln" style="left:6.600000000000023px;top:599.30px;color:#606366;font-size:17.2px">257</div>
<div class="ln" style="left:6.600000000000023px;top:626.80px;color:#606366;font-size:17.2px">258</div>
<svg style="left:79.00px;top:1.60px" width="12" height="15" viewBox="0 0 12 15"><path d="M0.5 0.5 H11.5 V9 L6 14.5 L0.5 9 Z" fill="#2b2b2b" stroke="#5e5e5e" stroke-width="1"/><path d="M2.4 5 H9.6" stroke="#5e5e5e" stroke-width="1"/></svg>
<svg style="left:79.00px;top:80.10px" width="12" height="15" viewBox="0 0 12 15"><path d="M0.5 14.5 H11.5 V6 L6 0.5 L0.5 6 Z" fill="#2b2b2b" stroke="#5e5e5e" stroke-width="1"/><path d="M2.4 10 H9.6" stroke="#5e5e5e" stroke-width="1"/></svg>
<svg style="left:79.00px;top:135.10px" width="12" height="15" viewBox="0 0 12 15"><path d="M0.5 14.5 H11.5 V6 L6 0.5 L0.5 6 Z" fill="#2b2b2b" stroke="#5e5e5e" stroke-width="1"/><path d="M2.4 10 H9.6" stroke="#5e5e5e" stroke-width="1"/></svg>
<svg style="left:79.00px;top:194.10px" width="12" height="15" viewBox="0 0 12 15"><path d="M0.5 0.5 H11.5 V9 L6 14.5 L0.5 9 Z" fill="#2b2b2b" stroke="#5e5e5e" stroke-width="1"/><path d="M2.4 5 H9.6" stroke="#5e5e5e" stroke-width="1"/></svg>
<svg style="left:79.00px;top:245.10px" width="12" height="15" viewBox="0 0 12 15"><path d="M0.5 14.5 H11.5 V6 L6 0.5 L0.5 6 Z" fill="#2b2b2b" stroke="#5e5e5e" stroke-width="1"/><path d="M2.4 10 H9.6" stroke="#5e5e5e" stroke-width="1"/></svg>
<svg style="left:78.90px;top:304.00px" width="11" height="11" viewBox="0 0 11 11"><rect x="0.5" y="0.5" width="10" height="10" fill="#2b2b2b" stroke="#5e5e5e" stroke-width="1"/><path d="M2.5 5.5 H8.5 M5.5 2.5 V8.5" stroke="#5e5e5e" stroke-width="1"/></svg>
<svg style="left:78.90px;top:359.00px" width="11" height="11" viewBox="0 0 11 11"><rect x="0.5" y="0.5" width="10" height="10" fill="#2b2b2b" stroke="#5e5e5e" stroke-width="1"/><path d="M2.5 5.5 H8.5 M5.5 2.5 V8.5" stroke="#5e5e5e" stroke-width="1"/></svg>
<svg style="left:78.90px;top:414.00px" width="11" height="11" viewBox="0 0 11 11"><rect x="0.5" y="0.5" width="10" height="10" fill="#2b2b2b" stroke="#5e5e5e" stroke-width="1"/><path d="M2.5 5.5 H8.5 M5.5 2.5 V8.5" stroke="#5e5e5e" stroke-width="1"/></svg>
<svg style="left:78.90px;top:469.00px" width="11" height="11" viewBox="0 0 11 11"><rect x="0.5" y="0.5" width="10" height="10" fill="#2b2b2b" stroke="#5e5e5e" stroke-width="1"/><path d="M2.5 5.5 H8.5 M5.5 2.5 V8.5" stroke="#5e5e5e" stroke-width="1"/></svg>
<svg style="left:78.90px;top:524.00px" width="11" height="11" viewBox="0 0 11 11"><rect x="0.5" y="0.5" width="10" height="10" fill="#2b2b2b" stroke="#5e5e5e" stroke-width="1"/><path d="M2.5 5.5 H8.5 M5.5 2.5 V8.5" stroke="#5e5e5e" stroke-width="1"/></svg>
<svg style="left:78.90px;top:579.00px" width="11" height="11" viewBox="0 0 11 11"><rect x="0.5" y="0.5" width="10" height="10" fill="#2b2b2b" stroke="#5e5e5e" stroke-width="1"/><path d="M2.5 5.5 H8.5 M5.5 2.5 V8.5" stroke="#5e5e5e" stroke-width="1"/></svg>
<svg style="left:78.90px;top:634.00px" width="11" height="11" viewBox="0 0 11 11"><rect x="0.5" y="0.5" width="10" height="10" fill="#2b2b2b" stroke="#5e5e5e" stroke-width="1"/><path d="M2.5 5.5 H8.5 M5.5 2.5 V8.5" stroke="#5e5e5e" stroke-width="1"/></svg>
<svg style="left:44.00px;top:190.00px" width="19" height="18" viewBox="0 0 19 18"><path d="M1.6 6.6 V11.4" stroke="#509a3e" stroke-width="1.4"/><circle cx="7.6" cy="9" r="6.1" fill="#509a3e"/><path d="M5.9 5.8 H9.3 V6.8 H8.2 V11.2 H9.3 V12.2 H5.9 V11.2 H7 V6.8 H5.9 Z" fill="#2a4f22"/><path d="M15.6 17.6 V3" stroke="#e05555" stroke-width="1.4" fill="none"/><path d="M12.4 5 L15.6 0.4 L18.8 5 Z" fill="#e05555"/></svg>
<svg style="left:44.00px;top:300.00px" width="19" height="18" viewBox="0 0 19 18"><path d="M1.6 6.6 V11.4" stroke="#509a3e" stroke-width="1.4"/><circle cx="7.6" cy="9" r="6.1" fill="#509a3e"/><path d="M5.9 5.8 H9.3 V6.8 H8.2 V11.2 H9.3 V12.2 H5.9 V11.2 H7 V6.8 H5.9 Z" fill="#2a4f22"/><path d="M15.6 17.6 V3" stroke="#e05555" stroke-width="1.4" fill="none"/><path d="M12.4 5 L15.6 0.4 L18.8 5 Z" fill="#e05555"/></svg>
<svg style="left:44.00px;top:520.00px" width="19" height="18" viewBox="0 0 19 18"><path d="M1.6 6.6 V11.4" stroke="#509a3e" stroke-width="1.4"/><circle cx="7.6" cy="9" r="6.1" fill="#509a3e"/><path d="M5.9 5.8 H9.3 V6.8 H8.2 V11.2 H9.3 V12.2 H5.9 V11.2 H7 V6.8 H5.9 Z" fill="#2a4f22"/><path d="M15.6 17.6 V3" stroke="#e05555" stroke-width="1.4" fill="none"/><path d="M12.4 5 L15.6 0.4 L18.8 5 Z" fill="#e05555"/></svg>
<svg style="left:49.00px;top:216.00px" width="20" height="20" viewBox="0 0 20 20"><circle cx="9.4" cy="10.2" r="8.6" fill="#cb5550"/><path d="M7 5 L11.2 7.6 L17.4 2.2" fill="none" stroke="#3a3a3a" stroke-width="3.2"/><path d="M7 5 L11.2 7.6 L17.4 2.2" fill="none" stroke="#dcdcdc" stroke-width="1.7"/></svg>
<div class="m" style="left:181.0px;top:-5.80px;"><span class="k">while</span>(var0.hasNext()) {</div>
<div class="m" style="left:225.0px;top:21.70px;">TCPTransport var1 = (TCPTransport)var0.next()<span class="k">;</span></div>
<div class="m" style="left:225.0px;top:49.20px;">var1.shedConnectionCaches()<span class="k">;</span></div>
<div class="m" style="left:181.0px;top:76.70px;">}</div>
<div class="m" style="left:137.0px;top:131.70px;">}</div>
<div class="m" style="left:137.0px;top:186.70px;"><span class="k">public void</span> exportObject(Target var1) <span class="k">throws</span> RemoteException {<span class="h">  var1: Target@1077</span></div>
<div class="m" style="left:181.0px;top:214.20px;"><span class="k">this</span>.transport.exportObject(var1)<span class="k">;</span><span class="h" style="color:#7f9fc3">  transport: TCPTransport@1095  var1: Target@1077</span></div>
<div class="m" style="left:137.0px;top:241.70px;">}</div>
<div class="m" style="left:137.0px;top:296.70px;"><span class="k">public</span> Channel getChannel()</div>
<div class="a" style="left:434.0px;top:295.5px;width:33.0px;height:27.5px;background:#3a3a3a;"></div>
<div class="m" style="left:434.0px;top:296.70px;color:#8c8c8c"> { </div>
<div class="m" style="left:467.0px;top:296.70px"><span class="k">return this</span>.getOutboundTransport().getChannel(</div>
<div class="a" style="left:975.5px;top:298.1px;width:84.5px;height:22px;background:#3b3b3b;border-radius:4px"></div>
<div class="t" style="left:981.2px;top:298.9px;color:#787878;font-size:15px;letter-spacing:1.533px;">endpoint:</div>
<div class="m" style="left:1063.7px;top:296.70px"><span class="k">this</span>)<span class="k">;</span></div>
<div class="a" style="left:1129.7px;top:295.5px;width:22.0px;height:27.5px;background:#3a3a3a;"></div>
<div class="m" style="left:1129.7px;top:296.70px;color:#8c8c8c"> }</div>
<div class="m" style="left:137.0px;top:351.70px;"><span class="k">public</span> String getHost()</div>
<div class="a" style="left:390.0px;top:350.5px;width:33.0px;height:27.5px;background:#3a3a3a;"></div>
<div class="m" style="left:390.0px;top:351.70px;color:#8c8c8c"> { </div>
<div class="m" style="left:423.0px;top:351.70px"><span class="k">return this</span>.host<span class="k">;</span></div>
<div class="a" style="left:610.0px;top:350.5px;width:22.0px;height:27.5px;background:#3a3a3a;"></div>
<div class="m" style="left:610.0px;top:351.70px;color:#8c8c8c"> }</div>
<div class="m" style="left:137.0px;top:406.70px;"><span class="k">public</span> <span class="k">int</span> getPort()</div>
<div class="a" style="left:357.0px;top:405.5px;width:33.0px;height:27.5px;background:#3a3a3a;"></div>
<div class="m" style="left:357.0px;top:406.70px;color:#8c8c8c"> { </div>
<div class="m" style="left:390.0px;top:406.70px"><span class="k">return this</span>.port<span class="k">;</span></div>
<div class="a" style="left:577.0px;top:405.5px;width:22.0px;height:27.5px;background:#3a3a3a;"></div>
<div class="m" style="left:577.0px;top:406.70px;color:#8c8c8c"> }</div>
<div class="m" style="left:137.0px;top:461.70px;"><span class="k">public</span> <span class="k">int</span> getListenPort()</div>
<div class="a" style="left:423.0px;top:460.5px;width:33.0px;height:27.5px;background:#3a3a3a;"></div>
<div class="m" style="left:423.0px;top:461.70px;color:#8c8c8c"> { </div>
<div class="m" style="left:456.0px;top:461.70px"><span class="k">return this</span>.listenPort<span class="k">;</span></div>
<div class="a" style="left:709.0px;top:460.5px;width:22.0px;height:27.5px;background:#3a3a3a;"></div>
<div class="m" style="left:709.0px;top:461.70px;color:#8c8c8c"> }</div>
<div class="m" style="left:137.0px;top:516.70px;"><span class="k">public</span> Transport getInboundTransport()</div>
<div class="a" style="left:555.0px;top:515.5px;width:33.0px;height:27.5px;background:#3a3a3a;"></div>
<div class="m" style="left:555.0px;top:516.70px;color:#8c8c8c"> { </div>
<div class="m" style="left:588.0px;top:516.70px"><span class="k">return this</span>.transport<span class="k">;</span></div>
<div class="a" style="left:830.0px;top:515.5px;width:22.0px;height:27.5px;background:#3a3a3a;"></div>
<div class="m" style="left:830.0px;top:516.70px;color:#8c8c8c"> }</div>
<div class="m" style="left:137.0px;top:571.70px;"><span class="k">public</span> RMIClientSocketFactory getClientSocketFactory()</div>
<div class="a" style="left:731.0px;top:570.5px;width:33.0px;height:27.5px;background:#3a3a3a;"></div>
<div class="m" style="left:731.0px;top:571.70px;color:#8c8c8c"> { </div>
<div class="m" style="left:764.0px;top:571.70px"><span class="k">return this</span>.csf<span class="k">;</span></div>
<div class="a" style="left:940.0px;top:570.5px;width:22.0px;height:27.5px;background:#3a3a3a;"></div>
<div class="m" style="left:940.0px;top:571.70px;color:#8c8c8c"> }</div>
<div class="m" style="left:137.0px;top:626.70px;"><span class="k">public</span> RMIServerSocketFactory getServerSocketFactory()</div>
<div class="a" style="left:731.0px;top:625.5px;width:33.0px;height:27.5px;background:#3a3a3a;"></div>
<div class="m" style="left:731.0px;top:626.70px;color:#8c8c8c"> { </div>
<div class="m" style="left:764.0px;top:626.70px"><span class="k">return this</span>.ssf<span class="k">;</span></div>
<div class="a" style="left:940.0px;top:625.5px;width:22.0px;height:27.5px;background:#3a3a3a;"></div>
<div class="m" style="left:940.0px;top:626.70px;color:#8c8c8c"> }</div>
<div class="a" style="left:94px;top:628px;width:882px;height:10px;background:rgba(255,255,255,0.16);"></div>
</div>
<svg style="left:679px;top:383px" width="222" height="55" viewBox="0 0 222 55"><path d="M4.5 13.5 H103.5 L111.3 0.8 L120 13.5 H217.5 Q221.5 13.5 221.5 17.5 V50.5 Q221.5 54.5 217.5 54.5 H4.5 Q0.5 54.5 0.5 50.5 V17.5 Q0.5 13.5 4.5 13.5 Z" fill="#4c4e4e" stroke="#858585" stroke-width="1.3" style="filter:drop-shadow(0 2px 3px rgba(0,0,0,.4))"/><path d="M20.5 34.8 H32.5 M26.5 28.8 V40.8" stroke="#c6c6c6" stroke-width="2.3"/></svg>
<div class="t" style="left:720.3px;top:408px;color:#7c7c7c;letter-spacing:0.043px;">{TCPTransport@1095}</div>
<div class="t" style="left:11.4px;top:790.5px;letter-spacing:0.721px;">Debug:</div>
<svg style="left:89px;top:791px" width="20" height="19" viewBox="0 0 20 19"><path d="M3.5 3 V0.5 H17.5 V11.5 H15" fill="none" stroke="#7d8a94" stroke-width="1"/><rect x="0" y="3" width="15" height="12" fill="#7d8a94"/><rect x="1.6" y="5.6" width="11.8" height="7.8" fill="#3a8db0"/><circle cx="16.3" cy="15.8" r="2.9" fill="#1ee11e"/></svg>
<div class="t" style="left:113.6px;top:790.5px;letter-spacing:0.968px;">test</div>
<svg style="left:150.5px;top:796.0px" width="9" height="9" viewBox="0 0 9 9"><path d="M0.4 0.4 L8.6 8.6 M8.6 0.4 L0.4 8.6" stroke="#6f7a86" stroke-width="1.2" fill="none"/></svg>
<div class="a" style="left:73px;top:812px;width:101px;height:4px;background:#4a88c7;"></div>
<div class="a" style="left:39px;top:816px;width:1px;height:209px;background:#323232;"></div>
<svg style="left:13px;top:825px" width="19" height="20" viewBox="0 0 19 20"><path d="M11.6 4.6 A6.4 6.4 0 1 0 15.6 12.4" fill="none" stroke="#499c54" stroke-width="2.2" transform="translate(-1.4 1.6)"/><path d="M9.6 0.4 L16.6 5.6 L9.6 10.6 Z" fill="#499c54"/><rect x="10.4" y="12.4" width="6.6" height="6.6" fill="#afb1b3"/></svg>
<div class="a" style="left:10px;top:854px;width:24px;height:1px;background:#515151;"></div>
<svg style="left:15.5px;top:866.5px" width="15" height="15" viewBox="0 0 15 15"><rect x="0" y="0.6" width="3.6" height="13.8" fill="#499c54"/><path d="M6 0 L15 7.5 L6 15 Z" fill="#499c54"/></svg>
<svg style="left:17px;top:900px" width="10.5" height="14" viewBox="0 0 10.5 14"><rect x="0" y="0" width="3.6" height="14" fill="#5e6163"/><rect x="6.6" y="0" width="3.6" height="14" fill="#5e6163"/></svg>
<div class="a" style="left:16px;top:934px;width:12px;height:12px;background:#c75450;"></div>
<div class="a" style="left:10px;top:960px;width:24px;height:1px;background:#515151;"></div>
<svg style="left:13px;top:971px" width="20" height="19" viewBox="0 0 20 19"><circle cx="12.6" cy="6" r="5.6" fill="#c75450"/><circle cx="6.4" cy="12.4" r="5.9" fill="#3c3f41"/><circle cx="6.4" cy="12.4" r="5" fill="#c75450"/></svg>
<svg style="left:18.4px;top:1009.8px" width="8.4" height="6.4" viewBox="0 0 8.4 6.4"><path d="M0.5 0.4 L3.4 3.2 L0.5 6 M4.6 0.4 L7.5 3.2 L4.6 6" fill="none" stroke="#afb1b3" stroke-width="1.1"/></svg>
<div class="a" style="left:40px;top:850px;width:1760px;height:1px;background:#323232;"></div>
<div class="t" style="left:56.8px;top:824px;font-size:14px;letter-spacing:0.057px;">Debugger</div>
<div class="a" style="left:41px;top:848px;width:93px;height:3px;background:#4a88c7;"></div>
<svg style="left:150px;top:827.5px" width="16" height="12.6" viewBox="0 0 16 12.6"><rect x="0" y="0" width="16" height="12.6" fill="#afb1b3"/><path d="M4.6 2.8 L8.6 6.3 L4.6 9.8" fill="none" stroke="#3c3f41" stroke-width="1.7"/></svg>
<div class="t" style="left:172.5px;top:824px;font-size:14px;letter-spacing:-0.196px;">Console</div>
<svg style="left:242px;top:827px" width="16" height="13.5" viewBox="0 0 16 13.5"><rect x="0" y="0" width="16" height="2.4" fill="#afb1b3"/><rect x="0" y="5" width="16" height="3.4" fill="#389fd6"/><rect x="0" y="11" width="16" height="2.4" fill="#afb1b3"/></svg>
<div class="a" style="left:270px;top:821px;width:1px;height:25px;background:#515151;"></div>
<svg style="left:282.5px;top:823.2px" width="17" height="17" viewBox="0 0 17 17"><rect x="0.5" y="14.6" width="15.6" height="2.2" fill="#afb1b3"/><path d="M1 8.8 L7.6 2 L14 8.6" fill="none" stroke="#389fd6" stroke-width="2"/><path d="M9.6 10.2 H16.2 V3.6 Z" fill="#389fd6"/></svg>
<svg style="left:314.6px;top:823.2px" width="17" height="17" viewBox="0 0 17 17"><rect x="0.5" y="14.6" width="15.6" height="2.2" fill="#afb1b3"/><path d="M8.3 0.4 V8" stroke="#389fd6" stroke-width="2.2" fill="none"/><path d="M2.2 6 H14.4 L8.3 12.4 Z" fill="#389fd6"/></svg>
<svg style="left:347.4px;top:823.2px" width="17" height="17" viewBox="0 0 17 17"><rect x="0.5" y="14.6" width="15.6" height="2.2" fill="#afb1b3"/><path d="M8.3 0.4 V8" stroke="#db5860" stroke-width="2.2" fill="none"/><path d="M2.2 6 H14.4 L8.3 12.4 Z" fill="#db5860"/></svg>
<svg style="left:379.8px;top:823.2px" width="17" height="17" viewBox="0 0 17 17"><rect x="0.5" y="14.6" width="15.6" height="2.2" fill="#afb1b3"/><path d="M8.3 12.4 V5" stroke="#389fd6" stroke-width="2.2" fill="none"/><path d="M2.2 7 H14.4 L8.3 0.6 Z" fill="#389fd6"/></svg>
<svg style="left:412.5px;top:823.6px" width="17" height="17" viewBox="0 0 17 17"><path d="M1 0.8 L7.8 7.6 M7.8 0.8 L1 7.6" stroke="#db5860" stroke-width="2.2" fill="none"/><path d="M9.6 5.4 H15.2 V15.2 H5.4 V10" fill="none" stroke="#afb1b3" stroke-width="2"/></svg>
<svg style="left:445px;top:823.6px" width="19" height="19" viewBox="0 0 19 19"><path d="M0.8 1 L8.4 8.6" stroke="#389fd6" stroke-width="2.2" fill="none"/><path d="M3.4 10.8 H10.6 V3.6 Z" fill="#389fd6"/><path d="M11.4 7.6 Q13.6 7.6 14.4 8.8 Q15.2 7.6 17.4 7.6 M14.4 8.8 V16.8 M11.4 18 Q13.6 18 14.4 16.8 Q15.2 18 17.4 18" fill="none" stroke="#afb1b3" stroke-width="1.1"/></svg>
<div class="a" style="left:473px;top:821px;width:1px;height:25px;background:#515151;"></div>
<svg style="left:487.5px;top:825.6px" width="15" height="15" viewBox="0 0 15 15"><rect x="1" y="1" width="13" height="13" fill="none" stroke="#afb1b3" stroke-width="2"/><rect x="2" y="5.6" width="11" height="7.4" fill="#afb1b3"/><path d="M5.7 5.6 V13 M9.3 5.6 V13 M2 9.3 H13" stroke="#3c3f41" stroke-width="1.1"/></svg>
<svg style="left:519.5px;top:826.5px" width="16" height="13" viewBox="0 0 16 13"><path d="M0 1 H6 M10 1 H16 M0 6.5 H4.4 M11 6.5 H16 M0 12 H6 M10 12 H16 M4.4 12 Q8 11 8 6.5 Q8 2 11.6 1" fill="none" stroke="#5c5f61" stroke-width="1.4"/></svg>
<div class="t" style="left:57px;top:858px;font-size:14px;letter-spacing:-0.551px;">Frames</div>
<div class="t" style="left:874.5px;top:858px;font-size:14px;letter-spacing:-0.141px;">Variables</div>
<div class="a" style="left:40px;top:884px;width:1760px;height:1px;background:#323232;"></div>
<div class="a" style="left:857px;top:851px;width:1px;height:174px;background:#323232;"></div>
<div class="a" style="left:45px;top:889px;width:706px;height:30px;border:1px solid #646464;border-radius:4px;background:#3c3f41"></div>
<svg style="left:55px;top:896px" width="18" height="14" viewBox="0 0 18 14"><path d="M1.2 7.6 L6.2 12 L16.6 1.4" fill="none" stroke="#d4692c" stroke-width="2.6"/></svg>
<div class="t" style="left:77.5px;top:894.8px;letter-spacing:0.301px;">"main"@1 in group "main": RUNNING</div>
<svg style="left:731px;top:901.5px" width="10" height="6" viewBox="0 0 10 6"><path d="M0 0 H10 L5 6 Z" fill="#9da0a2"/></svg>
<svg style="left:766px;top:896.5px" width="14" height="15" viewBox="0 0 14 15"><path d="M7 14.6 V1.8 M1.4 7.2 L7 1.4 L12.6 7.2" fill="none" stroke="#5c5f61" stroke-width="2"/></svg>
<svg style="left:799px;top:896.5px" width="14" height="15" viewBox="0 0 14 15"><path d="M7 0.4 V13.2 M1.4 7.8 L7 13.6 L12.6 7.8" fill="none" stroke="#c0c2c4" stroke-width="2"/></svg>
<svg style="left:830.3px;top:896.6px" width="15.4" height="15.4" viewBox="0 0 15.4 15.4"><path d="M0 0 H15.4 L10.2 6.8 V15.4 H5.2 V6.8 Z" fill="#b9bbbd"/></svg>
<div class="a" style="left:40px;top:923px;width:817px;height:2px;background:#2f3133;"></div>
<div class="a" style="left:41px;top:925px;width:816px;height:100px;overflow:hidden;background:#4f4b41">
<div class="a" style="left:0;top:0;width:816px;height:26px;background:#4b6eaf"></div>
<div class="a" style="left:804px;top:0;width:10px;height:32px;background:rgba(255,255,255,0.17)"></div>
<div class="t" style="left:20.4px;top:3.8000000000000007px;color:#c5ccdb;letter-spacing:0.423px;">exportObject:411, TCPEndpoint</div>
<div class="t" style="left:255.5px;top:3.8000000000000007px;color:#c5ccdb;letter-spacing:0.457px;font-style:italic;">(sun.rmi.transport.tcp)</div>
<div class="t" style="left:20.4px;top:30.049999999999997px;color:#8b8b87;letter-spacing:0.396px;">exportObject:147, LiveRef</div>
<div class="t" style="left:213.8px;top:30.049999999999997px;color:#8b8b87;letter-spacing:0.43px;font-style:italic;">(sun.rmi.transport)</div>
<div class="t" style="left:20.4px;top:56.3px;color:#8b8b87;letter-spacing:0.327px;">exportObject:236, UnicastServerRef</div>
<div class="t" style="left:285.1px;top:56.3px;color:#8b8b87;letter-spacing:0.185px;font-style:italic;">(sun.rmi.server)</div>
<div class="t" style="left:20.4px;top:82.55px;color:#8b8b87;letter-spacing:0.464px;">exportObject:383, UnicastRemoteObject</div>
<div class="t" style="left:320.5px;top:82.55px;color:#8b8b87;letter-spacing:0.155px;font-style:italic;">(java.rmi.server)</div>
</div>
<div class="a" style="left:888px;top:885px;width:1px;height:140px;background:#323232;"></div>
<svg style="left:866px;top:894.5px" width="13" height="13" viewBox="0 0 13 13"><path d="M0 6.5 H13 M6.5 0 V13" stroke="#c0c2c4" stroke-width="2.2"/></svg>
<div class="a" style="left:866.5px;top:933px;width:12.5px;height:2.2px;background:#5a5d5f;"></div>
<svg style="left:866px;top:962.5px" width="14" height="8" viewBox="0 0 14 8"><path d="M7 0 L14 8 H0 Z" fill="#595c5e"/></svg>
<svg style="left:869.8px;top:1013px" width="8.4" height="6.4" viewBox="0 0 8.4 6.4"><path d="M0.5 0.4 L3.4 3.2 L0.5 6 M4.6 0.4 L7.5 3.2 L4.6 6" fill="none" stroke="#afb1b3" stroke-width="1.1"/></svg>
<svg style="left:893px;top:892.5px" width="10" height="11" viewBox="0 0 10 11"><path d="M0 0 L10 5.5 L0 11 Z" fill="#adadad"/></svg>
<svg style="left:918.3px;top:891.5px" width="13.5" height="14" viewBox="0 0 13.5 14"><rect x="0" y="0" width="13.5" height="3" fill="#bd8e38"/><rect x="0" y="5.4" width="13.5" height="3" fill="#bd8e38"/><rect x="0" y="10.8" width="13.5" height="3" fill="#bd8e38"/></svg>
<div class="t" style="left:937.8px;top:888.9px;color:#e8746f;letter-spacing:0.593px;">this</div>
<div class="t" style="left:969px;top:888.9px;">=</div>
<div class="t" style="left:982.8px;top:888.9px;color:#8c8c8c;letter-spacing:0.035px;">{TCPEndpoint@1086}</div>
<div class="t" style="left:1142px;top:888.9px;letter-spacing:0.319px;">"[169.254.97.153:9999]"</div>
<svg style="left:917px;top:915.5px" width="16" height="16" viewBox="0 0 16 16"><circle cx="8" cy="8" r="8" fill="#3d9ec3"/><rect x="7" y="7" width="2.2" height="5.6" fill="#23333a"/><rect x="7" y="3.6" width="2.2" height="2.2" fill="#23333a"/></svg>
<div class="t" style="left:937.8px;top:914.1px;letter-spacing:0.36px;">Variables debug info not available</div>
<svg style="left:893px;top:943.0px" width="10" height="11" viewBox="0 0 10 11"><path d="M0 0 L10 5.5 L0 11 Z" fill="#adadad"/></svg>
<svg style="left:916.4px;top:940.0px" width="17.2" height="17.2" viewBox="0 0 17.2 17.2"><circle cx="8.6" cy="8.6" r="8.6" fill="#c8932f"/><path d="M6.199999999999999 5.6 V13.8" stroke="#6b4d14" stroke-width="1.3" fill="none"/><circle cx="8.9" cy="8.6" r="2.7" fill="none" stroke="#6b4d14" stroke-width="1.3"/></svg>
<div class="t" style="left:937.8px;top:939.1px;color:#e8746f;letter-spacing:0.123px;">var1</div>
<div class="t" style="left:974.3px;top:939.1px;">=</div>
<div class="t" style="left:987.8px;top:939.1px;color:#8c8c8c;letter-spacing:0.391px;">{Target@1077}</div>
<div class="t" style="left:1584px;top:1003.2px;height:24px;line-height:24px;color:#ffffff;font-size:13.5px;letter-spacing:0">安全客<span style="margin-left:-3.4px">（</span><span style="font-size:15.6px;letter-spacing:-0.211px;margin-left:4.3px">www.anquanke.com</span><span style="margin-left:4.7px">）</span></div>
</body></html>
